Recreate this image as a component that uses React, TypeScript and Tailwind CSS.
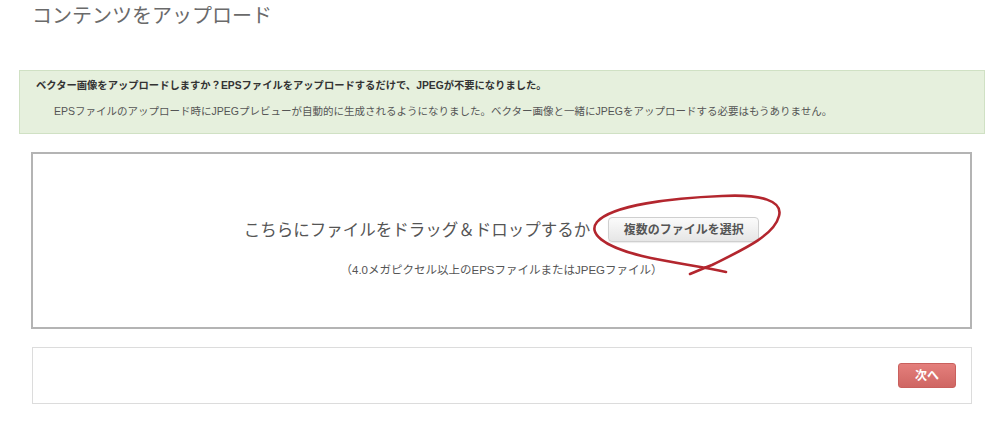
import React from 'react';

const font = { fontFamily: '"Liberation Sans", "Noto Sans CJK JP", sans-serif' };

const Scribble = () => (
  <svg
    className="absolute left-0 top-0 pointer-events-none"
    width="1000"
    height="436"
    viewBox="0 0 1000 436"
    fill="none"
  >
    <path
      d="M690 274 C700 270 706 267 712 265 C742 250 774 236 779 216 C783 201 762 194 722 196 C672 198 612 205 597 222 C588 233 602 246 642 256 C672 263 700 266 726 272"
      stroke="#b3262e"
      strokeWidth="2.6"
      strokeLinecap="round"
      strokeLinejoin="round"
    />
  </svg>
);

export default function App() {
  return (
    <div className="relative w-full h-[436px] bg-white overflow-hidden" style={font}>
      <h1 className="pl-[32px] pt-[6px] text-[20px] leading-[20px] font-normal text-[#6a6a6a]">
        コンテンツをアップロード
      </h1>

      <div className="mt-[44px] ml-[19px] mr-[15px] h-[64px] bg-[#e6f0dd] border border-[#d0e1c4] pl-[16px] pt-[8px]">
        <p className="text-[10.3px] leading-[14px] font-bold text-[#333]">
          ベクター画像をアップロードしますか？EPSファイルをアップロードするだけで、JPEGが不要になりました。
        </p>
        <p className="mt-[11px] pl-[18px] text-[10.5px] leading-[14px] text-[#555]">
          EPSファイルのアップロード時にJPEGプレビューが自動的に生成されるようになりました。ベクター画像と一緒にJPEGをアップロードする必要はもうありません。
        </p>
      </div>

      <div className="mt-[18px] ml-[31px] mr-[28px] h-[177px] border-2 border-[#b4b4b4] flex flex-col items-center pt-[63px]">
        <div className="flex items-center gap-[18px]">
          <span className="text-[16.5px] leading-[24px] text-[#555]">
            こちらにファイルをドラッグ＆ドロップするか
          </span>
          <button className="w-[151px] h-[25px] rounded-[4px] border border-[#cfcfcf] bg-gradient-to-b from-[#fbfbfb] to-[#e6e6e6] text-[12px] font-bold text-[#555] shadow-[0_1px_1px_rgba(0,0,0,0.08)]">
            複数のファイルを選択
          </button>
        </div>
        <p className="mt-[20px] text-[11.5px] leading-[16px] text-[#555]">
          （4.0メガピクセル以上のEPSファイルまたはJPEGファイル）
        </p>
      </div>

      <div className="mt-[18px] ml-[32px] mr-[28px] h-[57px] border border-[#dcdcdc] flex items-center justify-end pr-[15px]">
        <button className="w-[58px] h-[25px] rounded-[3px] bg-gradient-to-b from-[#e47f7c] to-[#cf6663] border border-[#c9605d] text-white text-[12px] font-bold">
          次へ
        </button>
      </div>

      <Scribble />
    </div>
  );
}
